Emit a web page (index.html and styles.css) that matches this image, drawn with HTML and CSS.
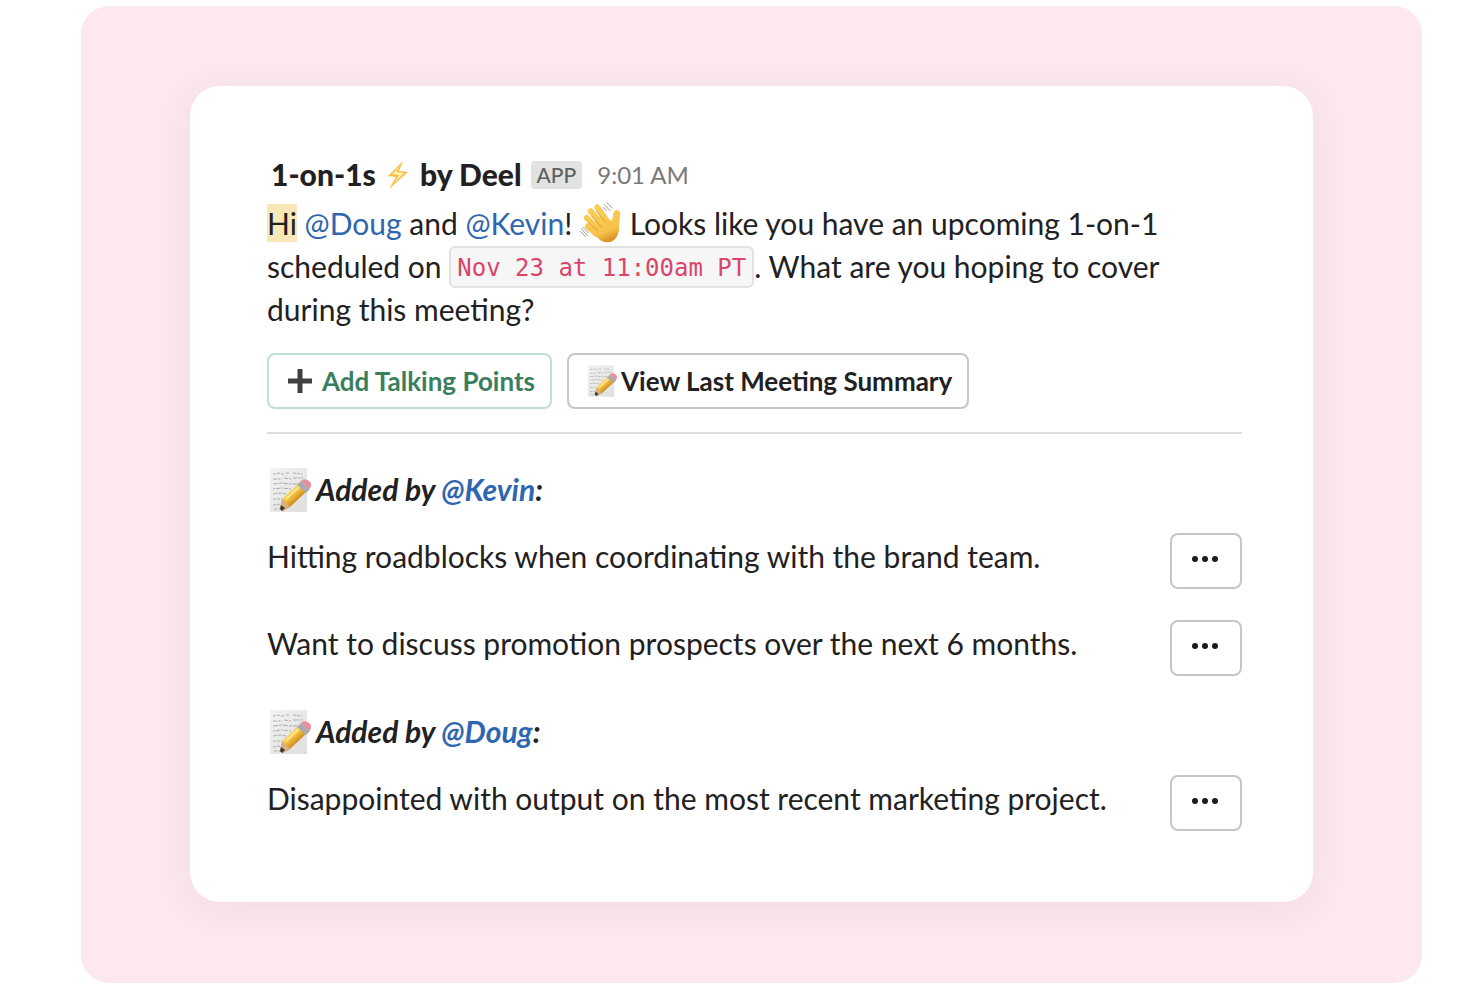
FILE: index.html
```html
<!DOCTYPE html>
<html lang="en">
<head>
<meta charset="utf-8">
<meta name="viewport" content="width=device-width, initial-scale=1">
<title>1-on-1s by Deel</title>
<link rel="stylesheet" href="styles.css">
</head>
<body>
<svg class="defs" aria-hidden="true">
  <defs>
    <linearGradient id="paper" x1="0" y1="0" x2="1" y2="1"><stop offset="0" stop-color="#f3f3f3"/><stop offset="1" stop-color="#dedede"/></linearGradient>
    <linearGradient id="wood" gradientUnits="userSpaceOnUse" x1="20" y1="23" x2="29" y2="33"><stop offset="0" stop-color="#fadd72"/><stop offset=".5" stop-color="#f3bd3d"/><stop offset="1" stop-color="#c98a1d"/></linearGradient>
    <linearGradient id="skin" gradientUnits="userSpaceOnUse" x1="14" y1="4" x2="30" y2="44"><stop offset="0" stop-color="#f9cf5a"/><stop offset=".7" stop-color="#f7c24a"/><stop offset="1" stop-color="#d08a1c"/></linearGradient>
    <symbol id="memo" viewBox="0 0 42 46">
      <path d="M1 1h37v44H1z" fill="url(#paper)"/>
      <g fill="none" stroke="#acacac" stroke-width="1">
        <path d="M4 7l7-1m1 1h3m2-1h4m3 0l9 1" stroke-dasharray="3 1"/>
        <path d="M4 12h9m2-1l7 1m2-1h10" stroke-dasharray="4 1 2 1"/>
        <path d="M4 17l9-1 8 1h12" stroke-dasharray="5 1 3 1"/>
        <path d="M4 22l9-1 9 1" stroke-dasharray="2 1 4 1"/>
        <path d="M4 27l8-1 5 1" stroke-dasharray="4 1"/>
        <path d="M4 32h9M4 38l8-1M5 42h6" stroke-dasharray="3 1"/>
      </g>
      <path d="M13 32 30 16l8 8-17 16-7 4-3-2z" fill="url(#wood)"/>
      <path d="M13 32l8 8-7 4-3-2z" fill="#d6b283"/>
      <path d="M12 38l4 3-3 3-2-2z" fill="#3a3836"/>
      <path d="M17 32 31 19" fill="none" stroke="#fbe594" stroke-width="2"/>
      <path d="M28 18l4-4 9 8-4 4z" fill="#a9abae"/>
      <path d="M32 14l1-1q3-2 7 1t1 7l-1 1z" fill="#e8909f"/>
    </symbol>
  </defs>
</svg>
<main class="stage">
  <article class="card">
    <header class="sender">
      <h1 class="name">1-on-1s
        <svg class="bolt" viewBox="0 0 22 30" role="img" aria-label="lightning"><path d="M16 1 1 16l8 1-7 12 19-17-9-1z" fill="#f8bd45"/><path d="M14 5 5 14l7 1-5 8 10-10-8-1z" fill="#fff0b8"/></svg>
        by Deel</h1>
      <span class="tag">APP</span>
      <time class="time">9:01 AM</time>
    </header>
    <p class="message"><mark class="hl">Hi</mark> <a href="#doug">@Doug</a> and <a href="#kevin">@Kevin</a>! <svg class="wave" viewBox="0 0 44 44" role="img" aria-label="waving hand">
        <path d="M11 25 25 12 31 19Q33 21 34 18L35 12Q36 9 39 9 43 10 42 14L41 26Q41 36 36 40 30 45 22 41L10 30Z" fill="url(#skin)"/>
        <g fill="none" stroke="url(#skin)" stroke-linecap="round" stroke-width="6">
          <path d="M17 34 8 26"/>
          <path d="M20 30 7 17"/>
          <path d="M24 25 11 10"/>
          <path d="M28 20 18 6"/>
        </g>
        <path d="M9 22l10 9M12 15l11 12M17 10l10 12" fill="none" stroke="#dc9c33" stroke-width="1"/>
        <path d="M25 3l7 7M28 1l6 6M24 6l4 4M1 28l7 8M0 31l6 6M3 27l6 6" fill="none" stroke="#959595" stroke-width="1"/>
      </svg> Looks like you have an upcoming 1-on-1 scheduled on <code class="code">Nov 23 at 11:00am PT</code>. What are you hoping to cover during this meeting?</p>
    <div class="actions">
      <button class="btn btn-add" type="button"><svg class="plus" viewBox="0 0 24 24" aria-hidden="true"><path d="M9.500 0h5v9.500H24v5h-9.500V24h-5v-9.500H0v-5h9.500z" fill="#404040"/></svg>Add Talking Points</button>
      <button class="btn" type="button"><svg class="memo-small" aria-hidden="true"><use href="#memo"/></svg>View Last Meeting Summary</button>
    </div>
    <hr class="rule">
    <section class="group">
      <h2 class="by"><svg class="memo" aria-hidden="true"><use href="#memo"/></svg><span>Added by <a href="#kevin">@Kevin</a>:</span></h2>
      <div class="row"><p class="point">Hitting roadblocks when coordinating with the brand team.</p><button class="more" type="button" aria-label="More options"><i></i><i></i><i></i></button></div>
      <div class="row"><p class="point">Want to discuss promotion prospects over the next 6 months.</p><button class="more" type="button" aria-label="More options"><i></i><i></i><i></i></button></div>
    </section>
    <section class="group">
      <h2 class="by"><svg class="memo" aria-hidden="true"><use href="#memo"/></svg><span>Added by <a href="#doug">@Doug</a>:</span></h2>
      <div class="row"><p class="point">Disappointed with output on the most recent marketing project.</p><button class="more" type="button" aria-label="More options"><i></i><i></i><i></i></button></div>
    </section>
  </article>
</main>
</body>
</html>
```
FILE: styles.css
```css
* { box-sizing: border-box; }
body {
  margin: 0;
  padding: 6px 58px 4px 81px;
  background: #fff;
  color: #222122;
  font-family: Lato, "Noto Sans", sans-serif;
  font-size: 30px;
  line-height: 43px;
}
h1, h2, p { margin: 0; }
a { color: #2f66b0; text-decoration: none; }
.defs { position: absolute; width: 0; height: 0; }
.stage { padding: 80px 109px 81px; border-radius: 28px; background: #fde8ef; }
.card {
  padding: 67px 71px 71px 77px;
  border-radius: 30px;
  background: #fff;
  box-shadow: 0 6px 36px rgba(110, 60, 110, .08);
}
.sender { display: flex; align-items: center; margin-bottom: 6px; padding-left: 4px; }
.name { font-size: 30px; font-weight: 900; line-height: 43px; white-space: nowrap; }
.bolt { width: 22px; height: 30px; margin: 0 4px; vertical-align: -4px; }
.tag {
  margin: 0 15px 0 9px;
  padding: 0 6px;
  border-radius: 4px;
  background: #e2e2e2;
  color: #616061;
  font-size: 21px;
  font-weight: 500;
  line-height: 28px;
}
.time { color: #7a797a; font-size: 24px; }
.message { max-width: 900px; }
.hl { padding: 1px 0; background: #f8e8b8; color: inherit; }
.wave { width: 42px; height: 43px; margin: -8px 0; overflow: visible; vertical-align: -1px; }
.code {
  padding: 6px 6px 4px;
  border: 2px solid #e2e2e2;
  border-radius: 6px;
  background: #f6f6f6;
  color: #d9466a;
  font-family: "DejaVu Sans Mono", monospace;
  font-size: 24px;
  line-height: 28px;
  vertical-align: 2px;
}
.actions { display: flex; gap: 15px; margin-top: 22px; }
.btn, .more {
  display: flex;
  align-items: center;
  justify-content: center;
  height: 56px;
  border: 2px solid #c6c6c6;
  border-radius: 8px;
  background: #fff;
  color: #222122;
}
.btn { padding: 0 15px 0 18px; font: 700 26px/36px Lato, sans-serif; white-space: nowrap; }
.btn-add { border-color: #c0dfd2; color: #3a7f5d; }
.plus { width: 24px; height: 24px; margin: 0 10px 0 1px; }
.memo-small { width: 30px; height: 34px; margin-right: 4px; }
.rule { margin: 23px 0 0; border: 0; border-top: 2px solid #dedede; }
.by { display: flex; align-items: center; gap: 5px; padding-left: 2px; font-size: 30px; font-style: italic; font-weight: 700; line-height: 43px; }
.memo { width: 42px; height: 46px; margin: -2px 0; }
.group { margin-top: 34px; }
.row { display: flex; align-items: center; justify-content: space-between; margin-top: 31px; }
.by + .row { margin-top: 22px; }
.point { padding-bottom: 9px; }
.more { flex: none; gap: 4px; width: 72px; padding: 0 2px 4px 0; }
.more i { width: 6px; height: 6px; border-radius: 50%; background: #1d1c1d; }
```
